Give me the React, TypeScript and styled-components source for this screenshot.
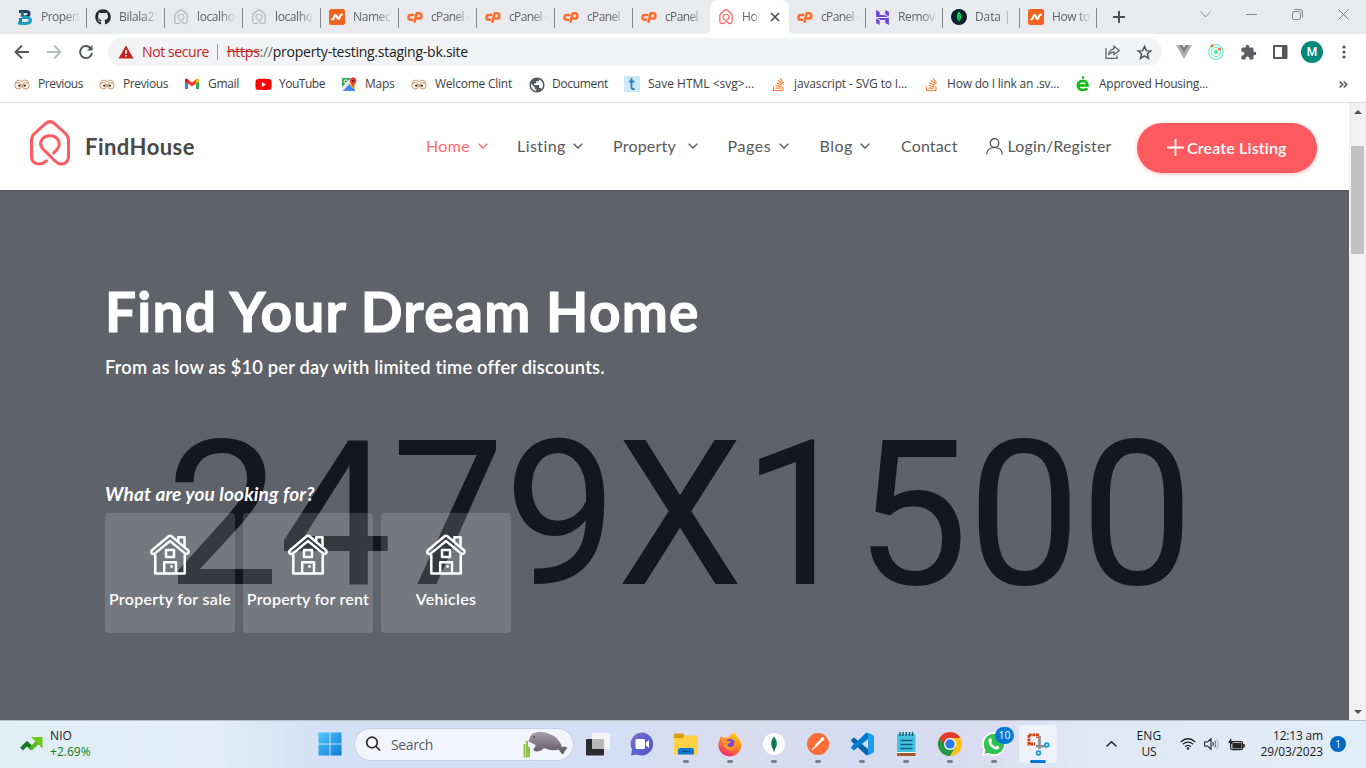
import React from "react";
import styled, { createGlobalStyle, css } from "styled-components";
import { FaGithub, FaStackOverflow, FaYoutube } from "react-icons/fa";
import { MdExtension, MdPublic } from "react-icons/md";
import { SiHostinger } from "react-icons/si";

const uiFont = `"Open Sans", "Noto Sans", sans-serif`;
const siteFont = `Lato, "Open Sans", sans-serif`;

const GlobalStyle = createGlobalStyle`
  * { box-sizing: border-box; }
  body { margin: 0; overflow: hidden; background: #fff; }
  svg { display: block; flex: none; overflow: visible; }
`;

const Screen = styled.div`
  width: 1366px;
  height: 768px;
  display: flex;
  flex-direction: column;
  overflow: hidden;
  font-family: ${uiFont};
`;

/* Text with individually tuned tracking */
const Label = styled.span<{ $ls?: number }>`
  white-space: pre;
  letter-spacing: ${(p) => p.$ls ?? 0}px;
`;

const IconSlot = styled.span`
  display: grid;
  place-items: center;
  width: 16px;
  height: 17px;
  flex: none;
`;

/* ---------- Browser tabs ---------- */
const TabStrip = styled.div`
  display: flex;
  height: 34px;
  flex: none;
  padding-left: 9px;
  background: #e8eaed;
`;

const TabItem = styled.div<{ $active?: boolean; $w: number; $sep?: boolean }>`
  position: relative;
  display: flex;
  align-items: center;
  width: ${(p) => p.$w}px;
  height: 34px;
  flex: none;
  padding-left: 8px;
  gap: 8px;
  color: #5f6368;
  font-size: 12px;
  ${(p) =>
    p.$active &&
    css`
      background: #fff;
      border-radius: 8px 8px 0 0;
      &::before, &::after {
        content: "";
        position: absolute;
        bottom: 0;
        width: 6px;
        height: 6px;
      }
      &::before { left: -6px; background: radial-gradient(circle at 0 0, transparent 6px, #fff 6.5px); }
      &::after { right: -6px; background: radial-gradient(circle at 100% 0, transparent 6px, #fff 6.5px); }
    `}
  ${(p) =>
    p.$sep &&
    css`
      background: linear-gradient(#85888c, #85888c) right 0 top 8px / 1px 20px no-repeat;
    `}
`;

const TabTitle = styled(Label)<{ $w?: number }>`
  width: ${(p) => p.$w ?? 38}px;
  flex: none;
  overflow: hidden;
  line-height: 18px;
  mask-image: linear-gradient(90deg, #000 62%, transparent 105%);
`;

const CloseMark = styled.span`
  margin-left: 3px;
`;

const NewTab = styled.div`
  display: flex;
  align-items: center;
  padding-left: 16px;
`;

const WindowControls = styled.div`
  display: flex;
  align-items: center;
  gap: 35px;
  height: 28px;
  margin-left: auto;
  padding-right: 17px;
`;

/* ---------- Address bar ---------- */
const Toolbar = styled.div`
  display: flex;
  align-items: center;
  height: 36px;
  flex: none;
  padding: 0 6px 0 14px;
  background: #fff;
`;

const NavButtons = styled.div`
  display: flex;
  gap: 16px;
  width: 94px;
  flex: none;
`;

const Omnibox = styled.div`
  display: flex;
  align-items: center;
  width: 1054px;
  height: 28px;
  flex: none;
  padding: 0 10px;
  border-radius: 14px;
  background: #f1f3f4;
  font-size: 14px;
  line-height: 18px;
  color: #202124;
`;

const Warning = styled.div`
  display: flex;
  align-items: center;
  gap: 8px;
  height: 16px;
  width: 100px;
  flex: none;
  color: #c5221f;
  border-right: 1px solid #9a9ea3;
`;

const Url = styled.div`
  padding-left: 9px;
  padding-bottom: 1px;
  s { color: #c5221f; }
  em { color: #5f6368; font-style: normal; }
`;

const OmniActions = styled.div`
  display: flex;
  align-items: center;
  gap: 17px;
  margin-left: auto;
`;

const Extensions = styled.div`
  display: grid;
  grid-template-columns: repeat(6, 32px);
  place-items: center;
  margin-left: 6px;
`;

const Profile = styled.div`
  display: grid;
  place-items: center;
  width: 22px;
  height: 22px;
  border-radius: 50%;
  background: #00897b;
  color: #fff;
  font: 500 12px Roboto, sans-serif;
`;

/* ---------- Bookmarks ---------- */
const BookmarkBar = styled.div`
  display: flex;
  align-items: center;
  height: 33px;
  flex: none;
  padding: 0 18px 4px 14px;
  border-bottom: 1px solid #d9dadc;
  background: #fff;
`;

const Bookmark = styled.div<{ $w: number }>`
  display: flex;
  align-items: center;
  gap: 8px;
  width: ${(p) => p.$w}px;
  flex: none;
  height: 18px;
  line-height: 18px;
  color: #3c4043;
  font-size: 12px;
`;

const More = styled.div`
  margin-left: auto;
`;

/* ---------- Site ---------- */
const Viewport = styled.div`
  display: flex;
  height: 617px;
  flex: none;
`;

const Site = styled.main`
  width: 1349px;
  flex: none;
  display: flex;
  flex-direction: column;
  font-family: ${siteFont};
`;

const Header = styled.header`
  display: flex;
  align-items: center;
  height: 87px;
  flex: none;
  padding: 0 32px 0 29px;
  background: #fff;
`;

const Brand = styled.div`
  display: flex;
  align-items: center;
  gap: 14px;
  width: 397px;
  flex: none;
  color: #484848;
  font-size: 22px;
  font-weight: 700;
  svg { margin-top: -7px; }
`;

const NavItem = styled.a<{ $w: number; $active?: boolean; $gap?: number }>`
  display: flex;
  align-items: center;
  gap: ${(p) => p.$gap ?? 7.5}px;
  width: ${(p) => p.$w}px;
  flex: none;
  line-height: 20px;
  padding-bottom: 1px;
  font-size: 16px;
  color: ${(p) => (p.$active ? "#ff6a6f" : "#585858")};
`;

const CreateButton = styled.a`
  display: flex;
  align-items: center;
  gap: 3px;
  width: 180px;
  height: 50px;
  margin: 3px 0 0 auto;
  flex: none;
  padding: 0 0 1px 30px;
  border-radius: 25px;
  background: #ff5a5f;
  box-shadow: 0 1px 4px rgba(255, 90, 95, 0.4);
  color: #fff;
  font-size: 16px;
  font-weight: 600;
`;

const Hero = styled.section`
  position: relative;
  height: 530px;
  flex: none;
  padding: 88px 105px 0;
  overflow: hidden;
  background: #5f6269;
  color: #fff;
  box-shadow: inset 0 3px 3px -2px rgba(0, 0, 0, 0.15);
`;

const Placeholder = styled.div`
  position: absolute;
  left: 166px;
  top: 207px;
  font: 400 202px/236px Roboto, sans-serif;
  letter-spacing: -0.9px;
  color: #14171f;
  white-space: nowrap;
`;

const HeroBody = styled.div`
  position: relative;
  display: flex;
  flex-direction: column;
`;

const Title = styled.h1`
  margin: 0;
  height: 67px;
  font-size: 55px;
  line-height: 67px;
  font-weight: 700;
  letter-spacing: 1.26px;
  -webkit-text-stroke: 1.1px #fff;
  stroke-linejoin: round;
  white-space: nowrap;
`;

const Subtitle = styled.p`
  margin: 10px 0 0;
  font-size: 18.3px;
  line-height: 24px;
  font-weight: 600;
  letter-spacing: 0.18px;
`;

const Question = styled.p`
  margin: 103px 0 7px;
  font-size: 19px;
  line-height: 24px;
  font-weight: 700;
  font-style: italic;
  letter-spacing: 0.14px;
`;

const Tiles = styled.div`
  display: flex;
  gap: 8px;
`;

const Tile = styled.div`
  display: flex;
  flex-direction: column;
  align-items: center;
  gap: 12px;
  width: 130px;
  height: 120px;
  padding-top: 21px;
  border-radius: 4px;
  background: rgba(255, 250, 255, 0.15);
  font-size: 16px;
  line-height: 24px;
  font-weight: 600;
`;

const ScrollTrack = styled.div`
  display: flex;
  flex-direction: column;
  align-items: center;
  width: 17px;
  background: #f1f1f1;
`;

const ScrollArrow = styled.div`
  display: grid;
  place-items: center;
  width: 17px;
  height: 17px;
`;

const ScrollThumb = styled.div`
  width: 13px;
  height: 108px;
  margin: 26px 0 auto;
  background: #c1c1c1;
`;

/* ---------- Taskbar ---------- */
const Taskbar = styled.footer`
  display: flex;
  align-items: center;
  height: 48px;
  flex: none;
  padding-bottom: 1px;
  border-top: 1px solid #b9bfc9;
  background: linear-gradient(90deg, #e2eef6 0, #e1ecf7 220px, #d3e0f6 330px, #d5e0f6 500px, #d4dff6 620px, #d9dcef 740px, #d3dcf2 850px, #dadcf0 980px, #dfe8f5 1080px, #e1edf7 1366px);
  color: #1b1b1b;
  font-size: 12px;
`;

const Ticker = styled.div`
  display: flex;
  align-items: center;
  gap: 7px;
  width: 318px;
  padding-left: 20px;
  flex: none;
`;

const Stack = styled.div<{ $align?: string }>`
  display: flex;
  flex-direction: column;
  align-items: ${(p) => p.$align ?? "flex-start"};
  line-height: 16px;
`;

const Gain = styled(Label)`
  color: #107c10;
`;

const SearchPill = styled.div`
  display: flex;
  align-items: center;
  width: 218px;
  height: 31px;
  margin: 0 3px 0 13px;
  flex: none;
  padding: 0 5px 0 10px;
  border-radius: 16px;
  background: #f2f5fd;
  box-shadow: 0 0 0 1px #c6cfe1;
  color: #5b5b5d;
  font-size: 14px;
  gap: 10px;
  > svg:last-child { margin-left: auto; }
`;

const AppButton = styled.div<{ $state?: "open" | "active" }>`
  position: relative;
  display: grid;
  place-items: center;
  width: 44px;
  height: 46px;
  flex: none;
  ${(p) =>
    p.$state &&
    css`
      &::after {
        content: "";
        position: absolute;
        bottom: 4px;
        left: ${p.$state === "active" ? 14 : 19}px;
        width: ${p.$state === "active" ? 16 : 6}px;
        height: 3px;
        border-radius: 2px;
        background: ${p.$state === "active" ? "#0078d4" : "#7c7f88"};
      }
    `}
`;

const ActiveTile = styled.div`
  display: grid;
  place-items: center;
  width: 38px;
  height: 38px;
  border-radius: 4px;
  background: #eef1fa;
  box-shadow: 0 0 0 0.5px #dfe3ee;
`;

const CountBadge = styled.span`
  position: absolute;
  left: 23px;
  top: 6px;
  width: 19px;
  height: 17px;
  border-radius: 9px;
  background: #0078d4;
  color: #fff;
  text-align: center;
  font-size: 10.5px;
  line-height: 16px;
`;

const Tray = styled.div`
  display: flex;
  align-items: center;
  margin-left: auto;
  padding-right: 20px;
`;

const Overflow = styled.div`
  margin-right: 20px;
`;

const TrayIcons = styled.div`
  display: flex;
  align-items: center;
  gap: 8px;
  margin: 0 16px 0 18px;
`;

const Notice = styled.span`
  display: grid;
  place-items: center;
  width: 16px;
  height: 16px;
  margin-left: 7px;
  border-radius: 50%;
  background: #0067c0;
  color: #fff;
  font-size: 10px;
`;

/* ---------- Drawings ---------- */
const HouseLogo = ({ w, color, sw = 3 }: { w: number; color: string; sw?: number }) => (
  <svg width={w} height={(w * 46) / 42} viewBox="0 0 42 46" fill="none" stroke={color} strokeWidth={sw} strokeLinecap="round" strokeLinejoin="round">
    <path d="M17.300 40.800C11 46.500 2.500 44 2.500 36.500V20.500C2.500 17.500 3.500 15.500 5.500 13.500L16.500 3.700C19.500 1 22.500 1 25.500 3.700L36.500 13.500C38.500 15.500 39.500 17.500 39.500 20.500V36C39.500 44 31.500 46.500 26 41L14 29C8.500 22.500 13.500 15.800 21 15.800C29.500 15.800 32.500 24 28.300 28.900L24.700 33" />
  </svg>
);

const CPanel = () => (
  <svg width="16" height="12" viewBox="0 0 16 12" fill="none" stroke="#ff6c2c" strokeWidth="2.500" strokeLinecap="round" strokeLinejoin="round">
    <path d="M6.300 4H4A2.400 2.400 0 0 0 3.700 8.800H5" />
    <path d="M7.500 10.800L9.700 2.300H11.800A2.600 2.600 0 0 1 11.800 7.600H10.600" />
  </svg>
);

const Chevron = () => (
  <svg width="10" height="6" viewBox="0 0 10 6" fill="none" stroke="currentColor" strokeWidth="1.300">
    <path d="M.7 .8L5 5L9.300 .8" />
  </svg>
);

const HouseTileIcon = () => (
  <svg width="40" height="41" viewBox="0 0 40 41" fill="none" stroke="#fff" strokeWidth="2.500" strokeLinejoin="round">
    <path d="M1.200 18.300Q1 17 2 16.200L18.600 2.200Q20 1.200 21.400 2.200L38 16.200Q39.200 17.300 38.400 18.800Q37 20.800 35 19.400L20 7L5 19.400Q3 20.800 1.600 19.200Z" />
    <path d="M5.300 20.500V39.600H34.700V20.500M28.300 7.500V3.200H34.500V13.500" />
    <path d="M16 16H24V23H16ZM14.200 39.600V28.300H26V39.600" />
    <circle cx="21.500" cy="32.500" r="1.400" fill="#fff" stroke="none" />
  </svg>
);

const SiteB = () => (
  <svg width="16" height="17" viewBox="0 0 16 17" fill="none" strokeWidth="3">
    <path d="M2 2.500H9Q12.500 2.500 12 5.300Q11.500 7.500 8 8H5" stroke="#1d3b5c" />
    <path d="M5.300 2.500V8" stroke="#236a8d" />
    <path d="M1 14L6 14.500H9Q13.500 14.300 13.500 11.500Q13.500 8.500 9 8.500H5" stroke="#15a0b8" />
    <path d="M3.500 9V13" stroke="#1b7f9c" />
  </svg>
);

const Namecheap = () => (
  <svg width="16" height="16" viewBox="0 0 16 16">
    <rect width="16" height="16" rx="2.500" fill="#f1631f" />
    <path d="M3.300 10.300Q4.500 10.300 5.300 7.800Q6.300 4.800 7.500 7L8.500 9Q9.700 11 10.500 8.500Q11.300 5.700 12.800 5.700" fill="none" stroke="#fff" strokeWidth="2.200" strokeLinecap="round" />
  </svg>
);

const Mongo = ({ s, bg, leaf }: { s: number; bg: string; leaf: string }) => (
  <svg width={s} height={s} viewBox="0 0 16 16">
    <circle cx="8" cy="8" r="8" fill={bg} />
    <path d="M8 2.500C10.800 5.500 10.800 10 8 12.500C5.200 10 5.200 5.500 8 2.500Z" fill={leaf} />
    <path d="M8 5V13.500" stroke="#0b5b3b" strokeWidth=".7" />
  </svg>
);

const Glasses = () => (
  <svg width="16" height="12" viewBox="0 0 16 12" fill="#fdf6ef" stroke="#c58a5c" strokeWidth=".9">
    <path d="M1 5.500Q2 2 5 2L8 3.500L11 2Q14 2 15 5.500" fill="none" />
    <path d="M.8 7.500Q1 4.500 4.500 4.500Q7.500 4.500 7.500 8Q7.200 11 4.300 11Q1 11 .8 7.500ZM15.200 7.500Q15 4.500 11.500 4.500Q8.500 4.500 8.500 8Q8.800 11 11.700 11Q15 11 15.200 7.500Z" />
    <circle cx="5.300" cy="7.600" r="1.200" fill="#5a3414" stroke="none" />
    <circle cx="10.700" cy="7.600" r="1.200" fill="#5a3414" stroke="none" />
  </svg>
);

const Gmail = () => (
  <svg width="16" height="12" viewBox="0 0 16 12">
    <path d="M1 2V11H4V4.500Z" fill="#4285f4" />
    <path d="M15 2V11H12V4.500Z" fill="#34a853" />
    <path d="M1 1.800Q1.500 0 3.500 1L8 4.500L12.500 1Q14.500 0 15 1.800V3.500L8 8.500L1 3.500Z" fill="#ea4335" />
    <path d="M12 1.500L12.500 1Q14.500 0 15 1.800V3.500L12 5.700Z" fill="#fbbc04" />
    <path d="M1 1.800Q1.500 0 3.500 1L4 1.500V5.700L1 3.500Z" fill="#c5221f" />
  </svg>
);

const MapsIcon = () => (
  <svg width="15" height="15" viewBox="0 0 15 15">
    <rect y="1" width="13" height="13" rx="1" fill="#34a853" />
    <path d="M0 14L7 7L13 13V14Z" fill="#4285f4" />
    <path d="M0 10L9 1H13L1 14H0Z" fill="#e9e9ea" />
    <path d="M7 7L13 1V13Z" fill="#fbc13a" />
    <circle cx="3.800" cy="4.500" r="1.700" fill="none" stroke="#fff" />
    <path d="M11 11Q10.700 8 8.600 6Q7 2.500 9.500 .7Q11.500-.4 13.500 1.200Q15.300 3.500 13.500 6Q11.500 8 11 11Z" fill="#ea4335" />
    <circle cx="11.200" cy="3.800" r="1.300" fill="#7c1d15" />
  </svg>
);

const TumblrLike = () => (
  <svg width="16" height="16" viewBox="0 0 16 16">
    <rect width="16" height="16" fill="#cde8f7" />
    <path d="M7.500 2V11.500Q7.500 13.500 10.500 12.800M5 5.500H10.500" fill="none" stroke="#3180b5" strokeWidth="1.800" />
  </svg>
);

const HousingE = () => (
  <svg width="14" height="16" viewBox="0 0 14 16" fill="none" stroke="#0fba0f" strokeWidth="2.600">
    <path d="M2 9.500H11.500Q11 5 6.800 5Q2 5 1.800 9.500Q2.500 14 7 14Q9.500 14 11.500 12.500" />
    <circle cx="7" cy="1.500" r="1.300" fill="#0fba0f" stroke="none" />
  </svg>
);

const StartIcon = () => (
  <svg width="24" height="24" viewBox="0 0 24 24">
    <defs>
      <linearGradient id="win" x1="0" y1="0" x2="1" y2="1">
        <stop offset="0" stopColor="#4cc9fb" />
        <stop offset="1" stopColor="#0b78d4" />
      </linearGradient>
    </defs>
    <path d="M.5 .5H11.500V11.500H.5ZM12.500 .5H23.500V11.500H12.500ZM.5 12.500H11.500V23.500H.5ZM12.500 12.500H23.500V23.500H12.500Z" fill="url(#win)" />
  </svg>
);

const Manatee = () => (
  <svg width="46" height="27" viewBox="0 0 46 27">
    <defs>
      <linearGradient id="sea" x1="0" y1="0" x2="0" y2="1">
        <stop offset="0" stopColor="#a8a0aa" />
        <stop offset="1" stopColor="#5c5561" />
      </linearGradient>
    </defs>
    <path d="M2.500 26.500V13M5 26.500V10M7 26.500V16" stroke="#8fbf3f" strokeWidth="1.900" />
    <path d="M7.500 8Q5.500 10.500 8 11.300L13 13.500Q14.500 15.500 11.500 17.500Q11 20.500 15 20.500Q20 20 22 17Q30 20.500 36.500 18.500L39.500 22.500Q42 24 42.500 20.500L45.500 17Q44 14.500 40 16Q37 7 29 3.500Q19-1.500 11 2.500Q7.500 4.500 7.500 8Z" fill="url(#sea)" />
    <circle cx="12" cy="6" r=".8" fill="#28242b" />
  </svg>
);

const TaskView = () => (
  <svg width="24" height="23" viewBox="0 0 24 23">
    <rect y="6" width="18" height="16.500" rx="1" fill="#2c2c2c" />
    <rect x="6" width="18" height="16" rx="1" fill="#f5f5f5" />
    <path d="M6 6H18V16H6Z" fill="#b8b8b8" />
  </svg>
);

const ChatIcon = () => (
  <svg width="24" height="24" viewBox="0 0 24 24">
    <defs>
      <linearGradient id="chat" x1="0" y1="0" x2="1" y2="1">
        <stop offset="0" stopColor="#8d6fc0" />
        <stop offset=".5" stopColor="#5b62d2" />
        <stop offset="1" stopColor="#5b50b5" />
      </linearGradient>
    </defs>
    <path d="M12 .5A11.500 11.500 0 1 1 7 22.500L1 23.500L2 17.500A11.500 11.500 0 0 1 12 .5Z" fill="url(#chat)" />
    <rect x="5.500" y="7" width="9.500" height="10" rx="1.500" fill="#fff" />
    <path d="M16 10.500L19 8V16L16 13.500Z" fill="#fff" />
  </svg>
);

const Explorer = () => (
  <svg width="24" height="22" viewBox="0 0 24 22">
    <path d="M0 1.500Q0 .5 1 .5H9L11 3V9H0Z" fill="#dc9b08" />
    <path d="M0 5H8.500L11 2.500H23Q24 2.500 24 3.500V21.500H0Z" fill="#ffd149" />
    <path d="M4 21.500V17Q4 15 6 15H18Q20 15 20 17V21.500Z" fill="#0f78d0" />
    <path d="M8 18.500H16" stroke="#084f92" strokeWidth="1.300" />
  </svg>
);

const Firefox = () => (
  <svg width="24" height="24" viewBox="0 0 24 24">
    <defs>
      <linearGradient id="fox" x1=".8" y1="0" x2=".3" y2="1">
        <stop offset="0" stopColor="#ffe226" />
        <stop offset=".45" stopColor="#ff8a1f" />
        <stop offset="1" stopColor="#f0266f" />
      </linearGradient>
    </defs>
    <path d="M15 0Q19 3 20 6Q24 9 23.300 14A11.500 11.500 0 1 1 2 7L3 4L6 6Q8 5 10 5.500Q13 3 15 0Z" fill="url(#fox)" />
    <circle cx="12" cy="12.500" r="5.500" fill="#7548d9" />
    <path d="M3 6Q7 6 9 9L13 9Q13 11 10 12Q10 15.500 14 14.500Q17 13 15.500 9Q19 11 18 15Q15 20 10 18Q5 16 5 11Z" fill="#ff962a" />
    <path d="M9.500 12Q10 15.500 14 14.500Q17 13 15.500 9Q13.500 6.500 11 7.500L13 9.500Q13 11 9.500 12Z" fill="#7548d9" />
  </svg>
);

const Postman = () => (
  <svg width="22" height="22" viewBox="0 0 22 22">
    <circle cx="11" cy="11" r="11" fill="#ff6c37" />
    <path d="M5.500 16.500L13 9" stroke="#fff" strokeWidth="1.300" strokeLinecap="round" />
    <path d="M9 12.500L14 7.500" stroke="#fff" strokeWidth="2.400" strokeLinecap="round" />
    <circle cx="15.500" cy="5.800" r="1.900" fill="#fff" />
  </svg>
);

const VsCode = () => (
  <svg width="24" height="24" viewBox="0 0 24 24">
    <path d="M2 7L4 5.500L18 17V22.500L16.500 23.500L1 9Z" fill="#0065a9" />
    <path d="M2 17L4 18.500L18 7V1.500L16.500 .5L1 15Z" fill="#007acc" />
    <path d="M17 .3L23 3Q24 3.500 24 4.500V19.500Q24 20.500 23 21L17 23.800Q18 23 18 22V2Q18 1 17 .3Z" fill="#1f9cf0" />
  </svg>
);

const Notepad = () => (
  <svg width="19" height="24" viewBox="0 0 19 24">
    <rect y="2" width="18.500" height="20" rx="1" fill="#45c2e0" />
    <path d="M0 21H18.500V24H0Z" fill="#a65a28" />
    <path d="M0 20.500H18.500" stroke="#fff" />
    <path d="M3 0V4M6 0V4M9.300 0V4M12.500 0V4M15.500 0V4" stroke="#165b75" strokeWidth="1.500" />
    <path d="M3.500 8.500H15.500M3.500 12.500H15.500M3.500 16.500H15.500" stroke="#10607d" strokeWidth="1.500" />
  </svg>
);

const Chrome = () => (
  <svg width="24" height="24" viewBox="0 0 24 24">
    <circle cx="12" cy="12" r="12" fill="#fbc116" />
    <path d="M1.600 6A12 12 0 0 0 12 24L17.200 15L12 12L6.800 15Z" fill="#229a4a" />
    <path d="M1.600 6L6.800 15L12 6Z" fill="#229a4a" />
    <path d="M1.600 6A12 12 0 0 1 22.400 6H12A6 6 0 0 0 6.800 9V15Z" fill="#e33b2e" />
    <path d="M1.600 6L6.800 15A6 6 0 0 0 12 18V20L8 20Z" fill="#229a4a" />
    <circle cx="12" cy="12" r="6" fill="#fff" />
    <circle cx="12" cy="12" r="4.700" fill="#287ae6" />
  </svg>
);

const WhatsAppIcon = () => (
  <svg width="24" height="24" viewBox="0 0 24 24">
    <path d="M12 0A12 12 0 1 1 6.500 22.600L0 24L1.600 17.800A12 12 0 0 1 12 0Z" fill="#fff" />
    <circle cx="12" cy="12" r="10.300" fill="#30c34f" />
    <path d="M2.500 21.800L4 16L8 20.500Z" fill="#30c34f" />
    <path d="M8 6Q6 7 6.500 10Q8 15.500 13.500 17.500Q17 18 17.500 15L14.800 13.500L13.500 15Q10.500 13.500 9 10.500L10 9L9 6Z" fill="#fff" />
  </svg>
);

const Snip = () => (
  <svg width="24" height="24" viewBox="0 0 24 24" fill="none">
    <path d="M13.500 4V17M10 14.200H19" stroke="#8a8d92" strokeWidth="2.600" />
    <path d="M2.900 2.900H11.500V6M2.900 2.900V12H9" stroke="#d83b01" strokeWidth="2.800" strokeDasharray="2.800 .7" />
    <circle cx="20.800" cy="13" r="1.900" stroke="#169be0" strokeWidth="1.800" />
    <circle cx="12.500" cy="21" r="1.900" stroke="#169be0" strokeWidth="1.800" />
  </svg>
);

/* ---------- Data ---------- */
const cp = <CPanel />;
const grayHouse = <HouseLogo w={14} color="#b4b6b9" sw={3.600} />;

type TabData = { icon: React.ReactNode; title: string; ls: number; w: number; active?: boolean; sep?: boolean };
const tabs: TabData[] = [
  { icon: <SiteB />, title: "Property", ls: -0.5, w: 78, sep: true },
  { icon: <FaGithub size={16} color="#24292f" />, title: "Bilala21", ls: -0.3, w: 78, sep: true },
  { icon: grayHouse, title: "localhost", ls: -0.4, w: 78, sep: true },
  { icon: grayHouse, title: "localhost", ls: -0.4, w: 78, sep: true },
  { icon: <Namecheap />, title: "Namechea", ls: -0.4, w: 78, sep: true },
  { icon: cp, title: "cPanel -", ls: -0.63, w: 78, sep: true },
  { icon: cp, title: "cPanel -", ls: -0.63, w: 78, sep: true },
  { icon: cp, title: "cPanel -", ls: -0.63, w: 78, sep: true },
  { icon: cp, title: "cPanel -", ls: -0.63, w: 77 },
  { icon: <HouseLogo w={14} color="#ff5a5f" sw={3.600} />, title: "Home", ls: -0.4, w: 79, active: true },
  { icon: cp, title: "cPanel -", ls: -0.63, w: 77, sep: true },
  { icon: <SiHostinger size={15} color="#6b46d6" />, title: "Remove", ls: -0.35, w: 77, sep: true },
  { icon: <Mongo s={16} bg="#04202c" leaf="#00ed64" />, title: "Data | Cl", ls: -0.1, w: 77, sep: true },
  { icon: <Namecheap />, title: "How to", ls: -0.35, w: 77, sep: true },
];

const so = <FaStackOverflow size={15} color="#ef8236" />;
const bookmarks: { icon: React.ReactNode; text: string; ls: number; w: number }[] = [
  { icon: <Glasses />, text: "Previous", ls: -0.4, w: 85 },
  { icon: <Glasses />, text: "Previous", ls: -0.4, w: 85 },
  { icon: <Gmail />, text: "Gmail", ls: -0.31, w: 71 },
  { icon: <FaYoutube size={17} color="#f00" />, text: "YouTube", ls: -0.48, w: 86 },
  { icon: <MapsIcon />, text: "Maps", ls: -0.26, w: 70 },
  { icon: <Glasses />, text: "Welcome Clint", ls: -0.23, w: 117 },
  { icon: <MdPublic size={18} color="#55585c" />, text: "Document", ls: -0.31, w: 96 },
  { icon: <TumblrLike />, text: "Save HTML <svg>...", ls: 0.0, w: 146 },
  { icon: so, text: "javascript - SVG to I...", ls: -0.14, w: 153 },
  { icon: so, text: "How do I link an .sv...", ls: -0.21, w: 152 },
  { icon: <HousingE />, text: "Approved Housing...", ls: -0.22, w: 150 },
];

const nav = [
  { text: "Home", ls: 0.34, w: 91, active: true },
  { text: "Listing", ls: 0.42, w: 96 },
  { text: "Property", ls: 0.22, w: 114.5, gap: 12 },
  { text: "Pages", ls: 0.55, w: 92 },
  { text: "Blog", ls: 0.5, w: 81.5 },
];

const tiles = [
  { text: "Property for sale", ls: 0.3 },
  { text: "Property for rent", ls: 0.22 },
  { text: "Vehicles", ls: 0.3 },
];

export default function App() {
  return (
    <Screen>
      <GlobalStyle />
      <TabStrip>
        {tabs.map((t, i) => (
          <TabItem key={i} $w={t.w} $active={t.active} $sep={t.sep}>
            <IconSlot>{t.icon}</IconSlot>
            <TabTitle $ls={t.ls} $w={t.active ? 18 : 38}>{t.title}</TabTitle>
            {t.active && (
              <CloseMark>
                <svg width="8" height="8" viewBox="0 0 8 8" stroke="#4b4e52" strokeWidth="1.700">
                  <path d="M0 0L8 8M8 0L0 8" />
                </svg>
              </CloseMark>
            )}
          </TabItem>
        ))}
        <NewTab>
          <svg width="12" height="12" viewBox="0 0 12 12" stroke="#4b4e52" strokeWidth="2">
            <path d="M6 0V12M0 6H12" />
          </svg>
        </NewTab>
        <WindowControls>
          <svg width="11" height="7" viewBox="0 0 11 7" fill="none" stroke="#85878b"><path d="M.5 .5L5.500 6L10.500 .5" /></svg>
          <svg width="11" height="1" viewBox="0 0 11 1" stroke="#85878b"><path d="M0 .5H11" /></svg>
          <svg width="11" height="11" viewBox="0 0 11 11" fill="none" stroke="#85878b">
            <rect x=".5" y="2.500" width="8" height="8" rx="1.500" />
            <path d="M2.500 .5H8Q10.500 .5 10.500 3V8.500" />
          </svg>
          <svg width="11" height="11" viewBox="0 0 11 11" stroke="#77797d"><path d="M.5 .5L10.500 10.500M10.500 .5L.5 10.500" /></svg>
        </WindowControls>
      </TabStrip>

      <Toolbar>
        <NavButtons>
          <svg width="16" height="16" viewBox="0 0 16 16" fill="none" stroke="#54575b" strokeWidth="1.900"><path d="M15 8H2M8 1.500L1.500 8L8 14.500" /></svg>
          <svg width="16" height="16" viewBox="0 0 16 16" fill="none" stroke="#b9bbbe" strokeWidth="1.900"><path d="M1 8H14M8 1.500L14.500 8L8 14.500" /></svg>
          <svg width="16" height="16" viewBox="0 0 16 16" fill="none" stroke="#54575b" strokeWidth="1.900">
            <path d="M14 9A6 6 0 1 1 12.500 4L14 5.500" /><path d="M14.500 1V6.500H9Z" fill="#54575b" stroke="none" />
          </svg>
        </NavButtons>
        <Omnibox>
          <Warning>
            <svg width="16" height="14" viewBox="0 0 16 14"><path d="M8 .5L15.500 13.500H.5Z" fill="#c5221f" /><path d="M8 5V8.800M8 10V11.600" stroke="#fff" strokeWidth="1.600" /></svg>
            <Label $ls={-0.4}>Not secure</Label>
          </Warning>
          <Url><Label $ls={-0.25}><s>https</s><em>://</em>property-testing.staging-bk.site</Label></Url>
          <OmniActions>
            <svg width="15" height="14" viewBox="0 0 15 14" fill="none" stroke="#5f6368" strokeWidth="1.300">
              <path d="M1 3V13.300H12V10.500M9 1.200L14.300 5.500L9 9.500V7.200Q5.500 7 3.500 10Q4.500 4.500 9 3.700Z" />
            </svg>
            <svg width="15" height="15" viewBox="0 0 16 16" fill="none" stroke="#505357" strokeWidth="1.600">
              <path d="M8 1.500L9.900 6L14.700 6.300L11 9.500L12.200 14.200L8 11.600L3.800 14.200L5 9.500L1.300 6.300L6.100 6Z" />
            </svg>
          </OmniActions>
        </Omnibox>
        <Extensions>
          <svg width="16" height="14" viewBox="0 0 16 14"><path d="M0 0H4L8 7L12 0H16L8 14Z" fill="#b0b0b0" /><path d="M3.500 0H6.500L8 2.700L9.500 0H12.500L8 8Z" fill="#7d7d7d" /></svg>
          <svg width="16" height="16" viewBox="0 0 16 16" fill="none" stroke="#72edc0" strokeWidth="1.200">
            <circle cx="8" cy="8" r="7.300" /><circle cx="8" cy="8" r="4.500" /><circle cx="8" cy="8" r="2.200" fill="#58e6a0" stroke="none" />
            <circle cx="4" cy="1.800" r="1.600" fill="#f5733e" stroke="none" /><circle cx="11.500" cy="5" r="1.600" fill="#f5733e" stroke="none" />
          </svg>
          <MdExtension size={17} color="#5b5e62" />
          <svg width="15" height="14" viewBox="0 0 15 14"><rect width="14.500" height="14" rx="1" fill="#54575b" /><rect x="2" y="2" width="7" height="10" fill="#fff" /></svg>
          <Profile>M</Profile>
          <svg width="12" height="14" viewBox="0 0 12 14" fill="#54575b"><circle cx="6" cy="2" r="1.600" /><circle cx="6" cy="7" r="1.600" /><circle cx="6" cy="12" r="1.600" /></svg>
        </Extensions>
      </Toolbar>

      <BookmarkBar>
        {bookmarks.map((b, i) => (
          <Bookmark key={i} $w={b.w}>
            <IconSlot>{b.icon}</IconSlot>
            <Label $ls={b.ls}>{b.text}</Label>
          </Bookmark>
        ))}
        <More>
          <svg width="9" height="7" viewBox="0 0 9 7" fill="none" stroke="#54575b" strokeWidth="1.600"><path d="M.7 .5L3.700 3.500L.7 6.500M4.700 .5L7.700 3.500L4.700 6.500" /></svg>
        </More>
      </BookmarkBar>

      <Viewport>
        <Site>
          <Header>
            <Brand>
              <HouseLogo w={42} color="#ff5a5f" />
              <Label $ls={0.46}>FindHouse</Label>
            </Brand>
            {nav.map((n) => (
              <NavItem key={n.text} $w={n.w} $active={n.active} $gap={n.gap}>
                <Label $ls={n.ls}>{n.text}</Label>
                <Chevron />
              </NavItem>
            ))}
            <NavItem $w={85}><Label $ls={0.15}>Contact</Label></NavItem>
            <NavItem $w={126} $gap={4.5}>
              <svg width="17" height="17" viewBox="0 0 17 17" fill="none" stroke="#484848" strokeWidth="1.200">
                <circle cx="8.500" cy="5" r="4.300" /><path d="M.7 16.500Q1 9.500 8.500 9.500Q16 9.500 16.300 16.500" />
              </svg>
              <Label $ls={0.14}>Login/Register</Label>
            </NavItem>
            <CreateButton>
              <svg width="17" height="17" viewBox="0 0 17 17" stroke="#fff" strokeWidth="1.800"><path d="M8.500 0V17M0 8.500H17" /></svg>
              <Label $ls={0.17}>Create Listing</Label>
            </CreateButton>
          </Header>
          <Hero>
            <Placeholder>2479X1500</Placeholder>
            <HeroBody>
              <Title>Find Your Dream Home</Title>
              <Subtitle>From as low as $10 per day with limited time offer discounts.</Subtitle>
              <Question>What are you looking for?</Question>
              <Tiles>
                {tiles.map((t) => (
                  <Tile key={t.text}>
                    <HouseTileIcon />
                    <Label $ls={t.ls}>{t.text}</Label>
                  </Tile>
                ))}
              </Tiles>
            </HeroBody>
          </Hero>
        </Site>
        <ScrollTrack>
          <ScrollArrow><svg width="8" height="4" viewBox="0 0 8 4"><path d="M0 4L4 0L8 4Z" fill="#505050" /></svg></ScrollArrow>
          <ScrollThumb />
          <ScrollArrow><svg width="8" height="4" viewBox="0 0 8 4"><path d="M0 0L4 4L8 0Z" fill="#505050" /></svg></ScrollArrow>
        </ScrollTrack>
      </Viewport>

      <Taskbar>
        <Ticker>
          <svg width="23" height="14" viewBox="0 0 23 14" fill="none" strokeWidth="4">
            <path d="M1.500 12L7 6.500L12 11.500" stroke="#157a1c" />
            <path d="M10.500 12L19 4" stroke="#57b61d" />
            <path d="M11 0H22.500V11.500Z" fill="#6cca1c" />
          </svg>
          <Stack>
            <Label $ls={0.09}>NIO</Label>
            <Gain $ls={0.02}>+2.69%</Gain>
          </Stack>
        </Ticker>
        <StartIcon />
        <SearchPill>
          <svg width="16" height="16" viewBox="0 0 16 16" fill="none" stroke="#2a2b2d" strokeWidth="1.700"><circle cx="7" cy="6.500" r="5.300" /><path d="M11 10.500L15 14.500" /></svg>
          <Label $ls={-0.39}>Search</Label>
          <Manatee />
        </SearchPill>
        <AppButton><TaskView /></AppButton>
        <AppButton><ChatIcon /></AppButton>
        <AppButton $state="open"><Explorer /></AppButton>
        <AppButton $state="open"><Firefox /></AppButton>
        <AppButton $state="open"><Mongo s={22} bg="#fff" leaf="#108a55" /></AppButton>
        <AppButton $state="open"><Postman /></AppButton>
        <AppButton $state="open"><VsCode /></AppButton>
        <AppButton $state="open"><Notepad /></AppButton>
        <AppButton $state="open"><Chrome /></AppButton>
        <AppButton $state="open"><WhatsAppIcon /><CountBadge>10</CountBadge></AppButton>
        <AppButton $state="active"><ActiveTile><Snip /></ActiveTile></AppButton>
        <Tray>
          <Overflow>
            <svg width="11" height="6" viewBox="0 0 11 6" fill="none" stroke="#222" strokeWidth="1.500"><path d="M.5 5.500L5.500 .7L10.500 5.500" /></svg>
          </Overflow>
          <Stack $align="center"><Label $ls={0.19}>ENG</Label><Label $ls={-0.16}>US</Label></Stack>
          <TrayIcons>
            <svg width="16" height="12" viewBox="0 0 16 12" fill="none" stroke="#222" strokeWidth="1.200">
              <path d="M.7 4Q8-2.500 15.300 4M2.800 6.300Q8 1.800 13.200 6.300M5 8.700Q8 6 11 8.700" /><circle cx="8" cy="10.500" r="1.300" fill="#222" stroke="none" />
            </svg>
            <svg width="16" height="12" viewBox="0 0 16 12" fill="none" stroke="#222" strokeWidth="1.100">
              <path d="M.6 4H3.500L7 .8V11.200L3.500 8H.6ZM8.800 4Q10 6 8.800 8" /><path d="M10.700 2.500Q12.800 6 10.700 9.500" stroke="#777" /><path d="M12.500 .8Q16 6 12.500 11.200" stroke="#bbb" />
            </svg>
            <svg width="17" height="13" viewBox="0 0 17 13" fill="none" stroke="#222" strokeWidth="1.200">
              <rect x="2.600" y="3.600" width="12" height="8" rx="1.500" /><path d="M5 5.500H13V10H5Z" fill="#222" /><path d="M16 6V9.500" strokeWidth="1.600" /><path d="M3 0L0 5H3L2 8L6 3H3.500Z" fill="#222" stroke="none" />
            </svg>
          </TrayIcons>
          <Stack $align="flex-end"><Label $ls={-0.19}>12:13 am</Label><Label $ls={-0.12}>29/03/2023</Label></Stack>
          <Notice>1</Notice>
        </Tray>
      </Taskbar>
    </Screen>
  );
}
